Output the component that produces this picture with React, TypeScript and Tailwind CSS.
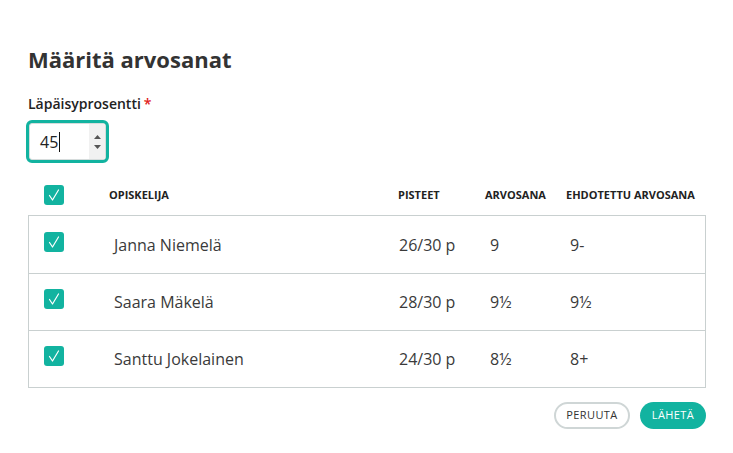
import React from "react";

const Check = () => (
  <span className="flex h-5 w-5 items-center justify-center rounded-[3px] bg-[#12b3a0]">
    <svg width="12" height="12" viewBox="0 0 12 12" fill="none">
      <polyline points="1.5,6.5 4.5,11 10.5,1" stroke="white" strokeWidth="1.2" strokeLinecap="round" strokeLinejoin="round" />
    </svg>
  </span>
);

const rows = [
  { name: "Janna Niemelä", pts: "26/30 p", grade: "9", sug: "9-" },
  { name: "Saara Mäkelä", pts: "28/30 p", grade: "9½", sug: "9½" },
  { name: "Santtu Jokelainen", pts: "24/30 p", grade: "8½", sug: "8+" },
];

export default function App() {
  return (
    <div className="h-[453px] w-[733px] bg-white text-[#333] font-['Open_Sans',sans-serif]">
      <div className="px-[28px] pt-[44px]">
        <h1 className="text-[22px] font-bold leading-[30px] text-[#333]">Määritä arvosanat</h1>
        <div className="mt-[20px] text-[14px] font-semibold leading-[20px] text-[#222]">
          Läpäisyprosentti<span className="ml-[3px] text-[#e02020]">*</span>
        </div>
        <div className="mt-[6px] -ml-[2px] flex h-[43px] w-[83px] rounded-[6px] border-[3px] border-[#12b3a0] bg-[#12b3a0]">
          <div className="flex flex-1 items-center rounded-[3px] border border-[#d6dcdc] bg-white">
            <span className="pl-[10px] text-[16px] text-[#222]">45</span>
            <span className="ml-[1px] h-[20px] w-px bg-[#111]"></span>
            <div className="ml-auto flex h-full w-[16px] flex-col items-center justify-center gap-[6px] bg-[#f1f1f1]">
              <svg width="7" height="4" viewBox="0 0 7 4"><polygon points="3.5,0 7,4 0,4" fill="#555" /></svg>
              <svg width="7" height="4" viewBox="0 0 7 4"><polygon points="0,0 7,0 3.5,4" fill="#555" /></svg>
            </div>
          </div>
        </div>

        <div className="mt-[21px] flex h-[22px] items-center text-[11px] font-bold text-[#222]">
          <div className="w-[81px] pl-[16px]"><Check /></div>
          <div className="w-[289px]">OPISKELIJA</div>
          <div className="w-[87px]">PISTEET</div>
          <div className="w-[81px]">ARVOSANA</div>
          <div>EHDOTETTU ARVOSANA</div>
        </div>

        <div className="mt-[9px] w-[678px] border border-[#c9d0d0]">
          {rows.map((r, i) => (
            <div key={r.name} className={`flex h-[57px] items-center text-[16px] text-[#3a3a3a] ${i > 0 ? "border-t border-[#c9d0d0]" : ""}`}>
              <div className="w-[85px] pl-[15px] -mt-[6px]"><Check /></div>
              <div className="w-[285px]">{r.name}</div>
              <div className="w-[91px]">{r.pts}</div>
              <div className="w-[80px]">{r.grade}</div>
              <div>{r.sug}</div>
            </div>
          ))}
        </div>

        <div className="mt-[14px] flex w-[678px] justify-end gap-[10px]">
          <button className="h-[27px] w-[76px] rounded-full border-2 border-[#cfd6d6] bg-white text-[11px] font-medium tracking-[0.4px] text-[#333]">PERUUTA</button>
          <button className="h-[27px] w-[66px] rounded-full bg-[#12b3a0] text-[11px] font-medium tracking-[0.4px] text-white">LÄHETÄ</button>
        </div>
      </div>
    </div>
  );
}
